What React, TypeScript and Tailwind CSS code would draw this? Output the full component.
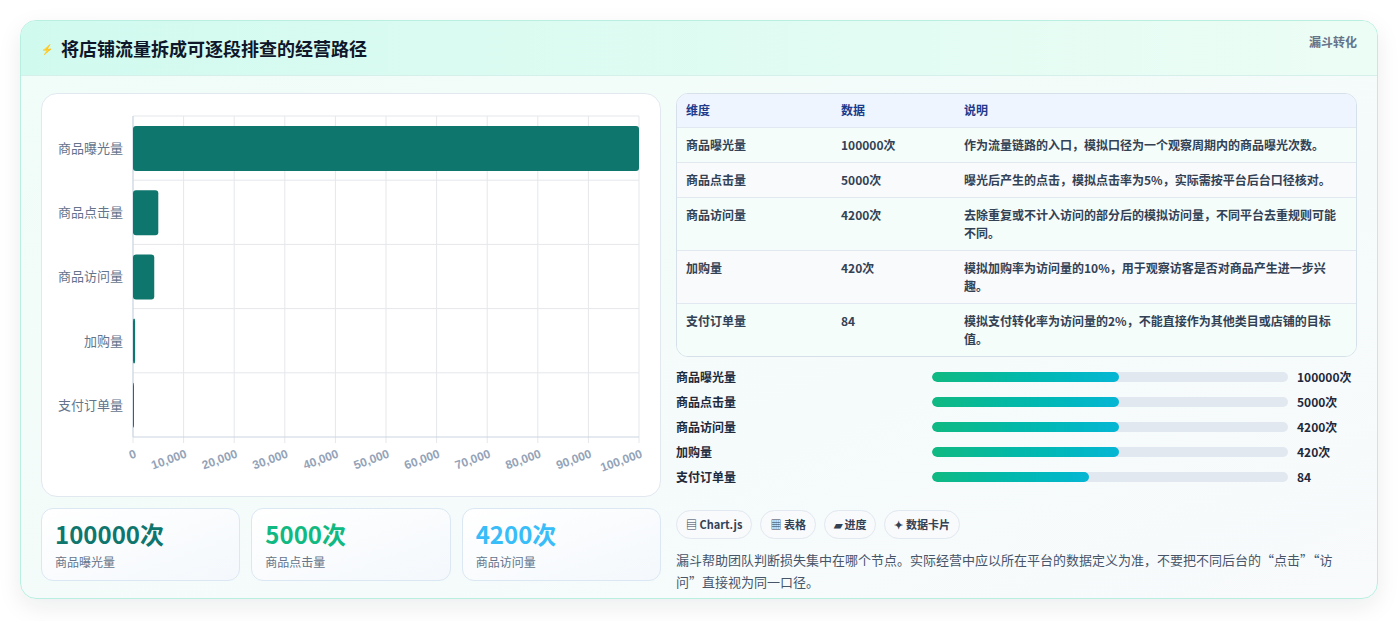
const rows = [
  { name: '商品曝光量', value: 100000, label: '100000次', note: '作为流量链路的入口，模拟口径为一个观察周期内的商品曝光次数。', pct: 52.5 },
  { name: '商品点击量', value: 5000, label: '5000次', note: '曝光后产生的点击，模拟点击率为5%，实际需按平台后台口径核对。', pct: 52.5 },
  { name: '商品访问量', value: 4200, label: '4200次', note: '去除重复或不计入访问的部分后的模拟访问量，不同平台去重规则可能不同。', pct: 52.5 },
  { name: '加购量', value: 420, label: '420次', note: '模拟加购率为访问量的10%，用于观察访客是否对商品产生进一步兴趣。', pct: 52.5 },
  { name: '支付订单量', value: 84, label: '84', note: '模拟支付转化率为访问量的2%，不能直接作为其他类目或店铺的目标值。', pct: 44 }
];

const font = '"Noto Sans CJK SC", "Noto Sans", sans-serif';

function FunnelChart() {
  // plot area inside svg: x 91..597, y 22..343
  const x0 = 91;
  const w = 506;
  const y0 = 22;
  const rowH = 64.2;
  const ticks = [0, 10000, 20000, 30000, 40000, 50000, 60000, 70000, 80000, 90000, 100000];
  return (
    <svg width="620" height="403" className="block">
      {ticks.map(t => {
        const x = x0 + (t / 100000) * w;
        return <line key={t} x1={x} x2={x} y1={y0} y2={y0 + 5 * rowH + 6} stroke="#e5e7eb" strokeWidth="1" />;
      })}
      {[0, 1, 2, 3, 4, 5].map(i => (
        <line key={i} x1={x0 - 0} x2={x0 + w} y1={y0 + i * rowH} y2={y0 + i * rowH} stroke={i === 5 ? '#cbd5e1' : '#e5e7eb'} strokeWidth="1" />
      ))}
      <line x1={x0} x2={x0} y1={y0} y2={y0 + 5 * rowH} stroke="#cbd5e1" strokeWidth="1" />
      {rows.map((r, i) => {
        const bw = Math.max((r.value / 100000) * w, 1);
        return (
          <g key={r.name}>
            <rect x={x0} y={y0 + i * rowH + 10} width={bw} height={45} rx="3" fill="#0f766e" />
            <text x={x0 - 10} y={y0 + i * rowH + 37} textAnchor="end" fontSize="13" fill="#64748b" fontFamily={font}>
              {r.name}
            </text>
          </g>
        );
      })}
      {ticks.map(t => {
        const x = x0 + (t / 100000) * w;
        return (
          <text
            key={t}
            x={x + 4}
            y={y0 + 5 * rowH + 20}
            textAnchor="end"
            fontSize="12"
            fontWeight="bold"
            fill="#94a3b8"
            fontFamily='"Liberation Sans", sans-serif'
            transform={`rotate(-20 ${x + 4} ${y0 + 5 * rowH + 20})`}
          >
            {t.toLocaleString('en-US')}
          </text>
        );
      })}
    </svg>
  );
}

function App() {
  const stats = [
    { v: '100000次', l: '商品曝光量', c: 'text-[#0f766e]' },
    { v: '5000次', l: '商品点击量', c: 'text-[#10b981]' },
    { v: '4200次', l: '商品访问量', c: 'text-[#38bdf8]' }
  ];
  const chips = ['▤ Chart.js', '▦ 表格', '▰ 进度', '✦ 数据卡片'];
  return (
    <div className="w-[1399px] h-[621px] bg-white pt-5 px-5" style={{ fontFamily: font }}>
      <div className="w-[1358px] h-[579px] rounded-2xl border border-[#b9efe0] overflow-hidden shadow-[0_8px_24px_rgba(15,23,42,0.08)] bg-gradient-to-br from-[#f0fdf8] to-[#f8fafc]">
        <div className="h-[55px] flex items-center justify-between px-5 bg-gradient-to-r from-[#d1faef] to-[#ecfdf5] border-b border-[#d5f0ea]">
          <div className="flex items-center gap-2">
            <span className="text-[10px] text-[#3b82f6]">⚡</span>
            <h1 className="text-[18px] font-bold text-[#0f172a]">将店铺流量拆成可逐段排查的经营路径</h1>
          </div>
          <span className="text-[12px] font-bold text-[#64748b] -mt-3">漏斗转化</span>
        </div>
        <div className="flex gap-[15px] px-5 pt-[17px]">
          <div className="w-[620px] flex flex-col gap-[11px]">
            <div className="h-[404px] rounded-2xl border border-[#e2e8f0] bg-white">
              <FunnelChart />
            </div>
            <div className="grid grid-cols-3 gap-[11px]">
              {stats.map(s => (
                <div key={s.l} className="h-[73px] rounded-xl border border-[#dbe7f3] bg-gradient-to-br from-white to-[#f4f8fc] px-[13px] pt-[9px]">
                  <div className={`text-[24px] font-bold leading-[32px] ${s.c}`}>{s.v}</div>
                  <div className="text-[12px] text-[#64748b] mt-[3px]">{s.l}</div>
                </div>
              ))}
            </div>
          </div>
          <div className="w-[685px] flex flex-col">
            <div className="rounded-xl border border-[#d6e0ea] overflow-hidden bg-white">
              <table className="w-full text-[12px] font-semibold text-[#334155] border-collapse">
                <thead>
                  <tr className="bg-[#eef5ff] text-[#1e3a8a] h-[33px]">
                    <th className="text-left font-semibold pl-[9px] w-[164px]">维度</th>
                    <th className="text-left font-semibold w-[123px]">数据</th>
                    <th className="text-left font-semibold pr-4">说明</th>
                  </tr>
                </thead>
                <tbody>
                  {rows.map((r, i) => (
                    <tr key={r.name} className={`border-t border-[#e2e8f0] ${i % 2 === 0 ? 'bg-[#f4fdf9]' : 'bg-[#f8fafc]'}`}>
                      <td className="pl-[9px] py-[8px] align-top leading-[18px]">{r.name}</td>
                      <td className="py-[8px] align-top leading-[18px]">{r.label}</td>
                      <td className="py-[8px] pr-4 align-top leading-[18px]">{r.note}</td>
                    </tr>
                  ))}
                </tbody>
              </table>
            </div>
            <div className="mt-[11px] flex flex-col gap-[7px]">
              {rows.map(r => (
                <div key={r.name} className="flex items-center h-[18px] text-[12px] font-semibold text-[#1e293b]">
                  <span className="w-[256px]">{r.name}</span>
                  <div className="w-[356px] h-[10px] rounded-full bg-[#e2e8f0] overflow-hidden">
                    <div className="h-full rounded-full bg-gradient-to-r from-[#10b981] to-[#06b6d4]" style={{ width: `${r.pct}%` }} />
                  </div>
                  <span className="ml-[9px] font-bold">{r.label}</span>
                </div>
              ))}
            </div>
            <div className="flex gap-2 mt-[24px]">
              {chips.map(c => (
                <span key={c} className="h-[29px] px-[9px] flex items-center rounded-full border border-[#e2e8f0] bg-[#f8fafc] text-[11px] font-semibold text-[#334155]">
                  {c}
                </span>
              ))}
            </div>
            <p className="mt-[10px] text-[13px] leading-[22px] text-[#475569]">
              漏斗帮助团队判断损失集中在哪个节点。实际经营中应以所在平台的数据定义为准，不要把不同后台的“点击”“访问”直接视为同一口径。
            </p>
          </div>
        </div>
      </div>
    </div>
  );
}

export default App;
